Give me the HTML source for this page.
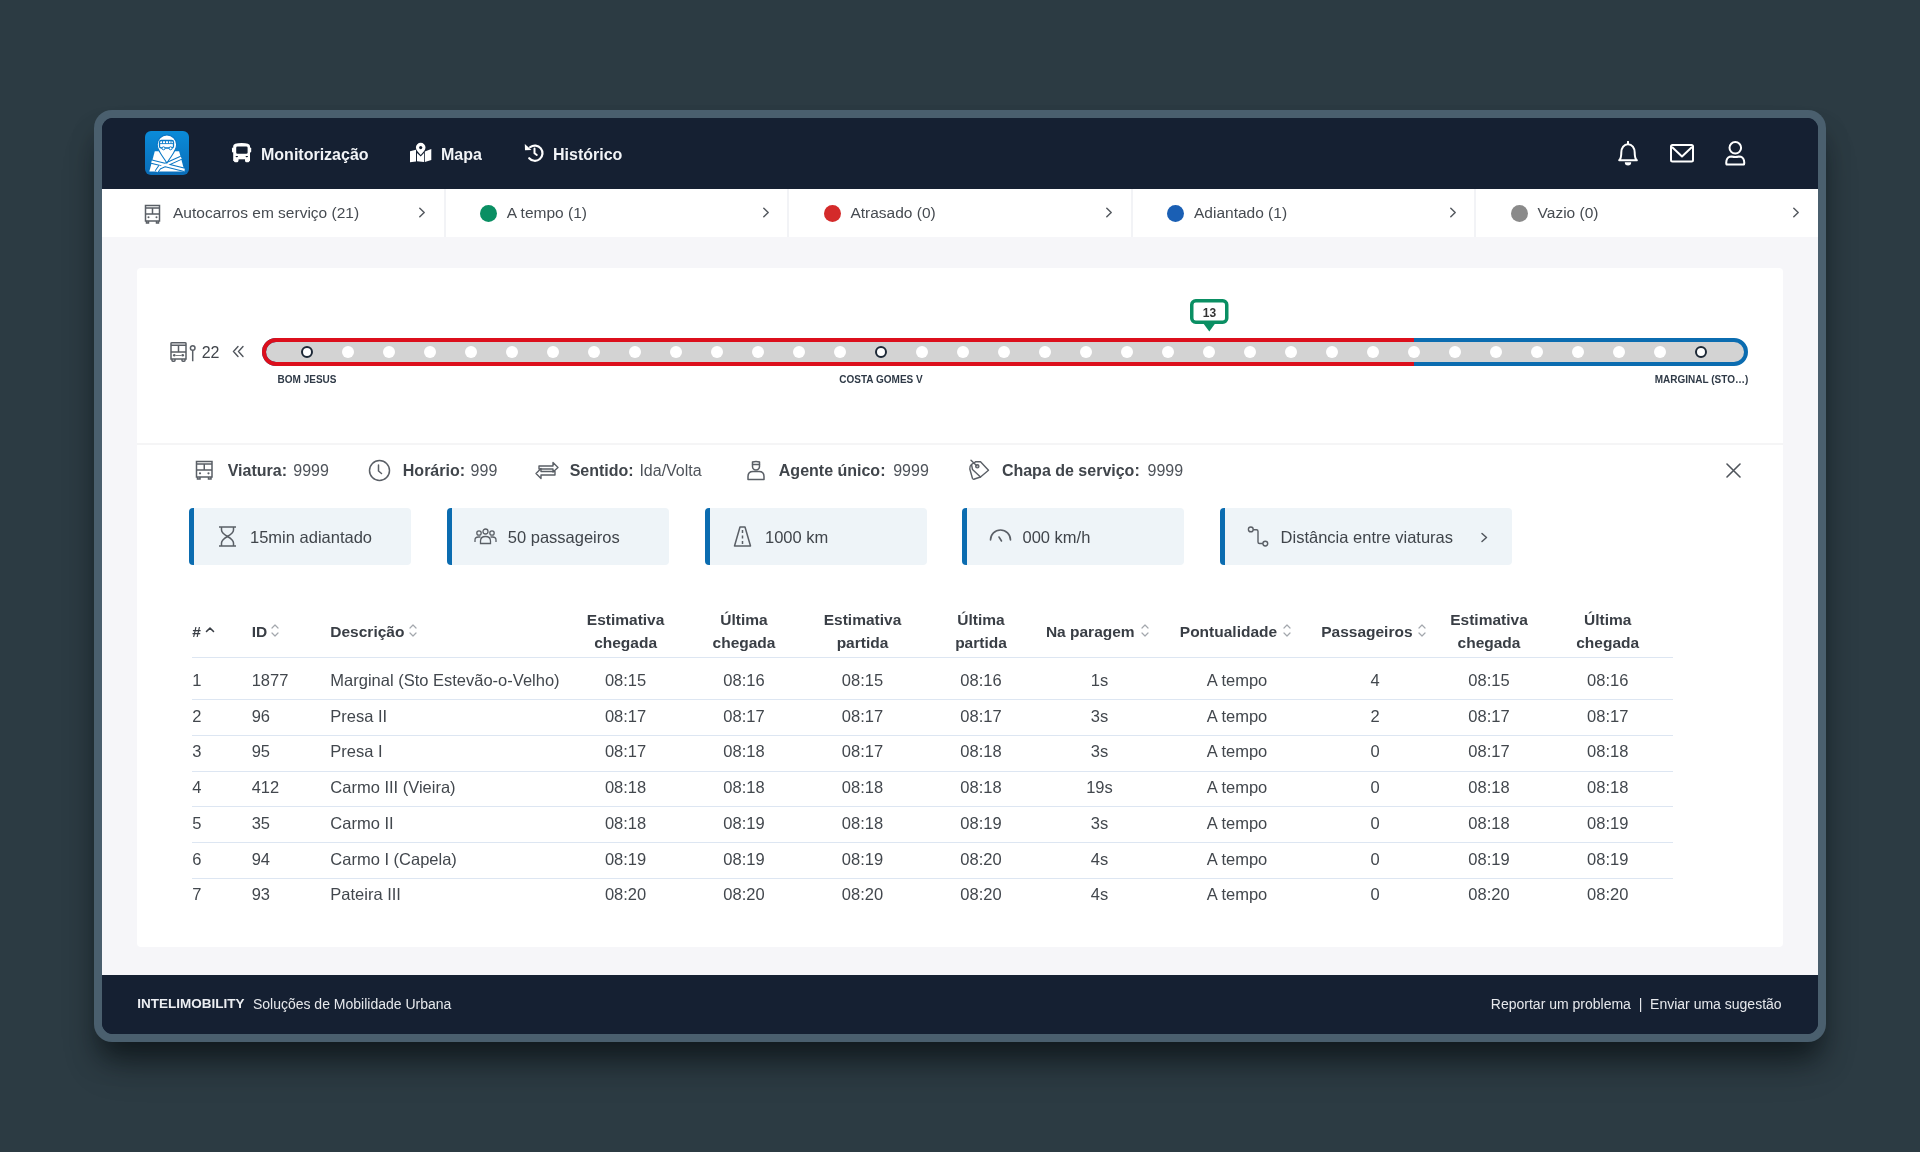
<!DOCTYPE html>
<html><head><meta charset="utf-8">
<style>
*{box-sizing:border-box;margin:0;padding:0}
html,body{width:1920px;height:1152px;overflow:hidden;-webkit-font-smoothing:antialiased;background:#2c3b43;font-family:"Liberation Sans",sans-serif;color:#40454b}
.abs{position:absolute}
#frame{position:absolute;left:94px;top:110px;width:1732px;height:932px;border-radius:18px;background:#4a5f6e;box-shadow:0 20px 26px -6px rgba(6,12,16,0.55),0 28px 40px -10px rgba(0,0,0,0.3)}
#inner{will-change:transform;position:absolute;left:102px;top:118px;width:1716px;height:916px;border-radius:11px;background:#152032;overflow:hidden}
#hdr{position:absolute;left:0;top:0;width:1716px;height:71px;background:#152032}
#status{position:absolute;left:0;top:71px;width:1716px;height:48px;background:#fff}
#footer{position:absolute;left:0;top:857px;width:1716px;height:59px;background:#152032}
#card{position:absolute;left:35px;top:150px;width:1646px;height:679px;background:#fff;border-radius:4px}
.t{position:absolute;white-space:nowrap;line-height:1}
</style></head><body>
<div id="frame"></div>
<div id="inner">
  <div class="abs" style="left:0;top:71px;width:1716px;height:786px;background:#f6f6f9"></div>
  <div id="hdr">
    <svg class="abs" style="left:43px;top:13px" width="44" height="44" viewBox="0 0 44 44">
      <defs><linearGradient id="lg" x1="0" y1="0" x2="0" y2="1"><stop offset="0" stop-color="#0a8bd9"/><stop offset="1" stop-color="#0a6db8"/></linearGradient></defs>
      <rect width="44" height="44" rx="6" fill="url(#lg)"/>
      <path d="M9.8 20.2 L4.3 40.6 L39.6 40.6 L34.1 20.2 Z" fill="#fff"/>
      <path d="M6.5 30.6 L39.6 38.9 M11.5 40.6 L15.5 35 M14.5 36.5 L36.3 26.7" stroke="#0a76c4" stroke-width="4.2" fill="none"/>
      <path d="M6.5 30.6 L39.6 38.9 M11.5 40.6 L15.5 35 M14.5 36.5 L36.3 26.7" stroke="#fff" stroke-width="2.2" fill="none"/>
      <path d="M21.9 3.9 a9.7 9.7 0 0 1 9.7 9.7 c0 6.5 -5.5 11 -9.7 18.5 c-4.2 -7.5 -9.7 -12 -9.7 -18.5 a9.7 9.7 0 0 1 9.7 -9.7z" fill="#fff" stroke="#0a78c6" stroke-width="1.1"/>
      <rect x="14.5" y="9.5" width="14" height="7.5" rx="1.8" fill="#fff" stroke="#0a7cc9" stroke-width="1.3"/>
      <path d="M15 12.6 H28 M17.5 10 V12.6 M20.5 10 V12.6 M23.5 10 V12.6 M26 10 V12.6" stroke="#0a7cc9" stroke-width="0.9"/>
      <circle cx="18.5" cy="17.3" r="1.5" fill="#fff" stroke="#0a7cc9" stroke-width="1"/><circle cx="25.6" cy="17.3" r="1.5" fill="#fff" stroke="#0a7cc9" stroke-width="1"/>
    </svg>
    <svg class="abs" style="left:124px;top:20px" width="30" height="30" viewBox="0 0 30 30">
      <path d="M7.2 8 Q7.2 5 15.6 5 Q24 5 24 8 V24.2 H7.2Z" fill="#fff"/>
      <rect x="6" y="9.5" width="2" height="5" rx="1" fill="#fff"/><rect x="23.2" y="9.5" width="2" height="5" rx="1" fill="#fff"/>
      <rect x="10.2" y="8.5" width="11.4" height="7.2" rx="1.3" fill="#152032"/>
      <path d="M9.6 18 a1.2 1.2 0 0 0 2.4 0Z M19.6 18 a1.2 1.2 0 0 0 2.4 0Z" fill="#152032"/>
      <rect x="12.3" y="21.3" width="6.8" height="4" fill="#152032"/>
      <rect x="6" y="23" width="20" height="3" fill="#152032"/>
      <rect x="8" y="20" width="4.3" height="4.3" rx="1.3" fill="#fff"/><rect x="19.1" y="20" width="4.3" height="4.3" rx="1.3" fill="#fff"/>
    </svg>
    <div class="t" style="left:159px;top:27px;font-size:16px;font-weight:700;color:#f2f4f7;line-height:19px">Monitorização</div>
    <svg class="abs" style="left:302px;top:20px" width="34" height="30" viewBox="0 0 34 30">
      <path d="M6 13.3 L12 11.8 V23.4 L6 24.3Z" fill="#fff"/>
      <path d="M20.8 13.5 L27.3 10.9 V22.1 L20.8 24Z" fill="#fff"/>
      <path d="M13 15 L16.7 18.5 L20 15 V24.1 L13 23.2Z" fill="#fff"/>
      <path d="M16.7 4.8 a4.8 4.8 0 0 1 4.8 4.8 c0 3 -2.5 4.6 -4.8 7.3 c-2.3 -2.7 -4.8 -4.3 -4.8 -7.3 a4.8 4.8 0 0 1 4.8 -4.8z" fill="#fff"/>
      <circle cx="16.7" cy="9.6" r="1.6" fill="#152032"/>
    </svg>
    <div class="t" style="left:339px;top:27px;font-size:16px;font-weight:700;color:#f2f4f7;line-height:19px">Mapa</div>
    <svg class="abs" style="left:416px;top:20px" width="32" height="30" viewBox="0 0 32 30">
      <path d="M12.2 9.2 A7.6 7.6 0 1 1 11.2 20.2" fill="none" stroke="#fff" stroke-width="2.2" stroke-linecap="round"/>
      <path d="M6.8 6 L7 12.3 L13.5 12Z" fill="#fff"/>
      <path d="M16.5 10.5 V15.3 L18.8 17" fill="none" stroke="#fff" stroke-width="2" stroke-linecap="round" stroke-linejoin="round"/>
    </svg>
    <div class="t" style="left:451px;top:27px;font-size:16px;font-weight:700;color:#f2f4f7;line-height:19px">Histórico</div>
    <svg class="abs" style="left:1514px;top:23px" width="24" height="26" viewBox="0 0 24 26">
      <path d="M3.2 19.3 C5.2 17.5 5.3 15 5.3 11.5 C5.3 6.8 8 3.2 12 3.2 C16 3.2 18.7 6.8 18.7 11.5 C18.7 15 18.8 17.5 20.8 19.3 Z" fill="none" stroke="#fff" stroke-width="2" stroke-linejoin="round"/>
      <path d="M12 0.8 V3" stroke="#fff" stroke-width="2" stroke-linecap="round"/>
      <path d="M8.8 21.2 A3.2 3.2 0 0 0 15.2 21.2Z" fill="#fff"/>
    </svg>
    <svg class="abs" style="left:1566px;top:24px" width="28" height="22" viewBox="0 0 28 22">
      <rect x="3" y="3" width="22" height="16.5" rx="1.5" fill="none" stroke="#fff" stroke-width="2"/>
      <path d="M4 5 L14 14.5 L24 5" fill="none" stroke="#fff" stroke-width="2" stroke-linejoin="round"/>
    </svg>
    <svg class="abs" style="left:1621px;top:22px" width="26" height="27" viewBox="0 0 26 27">
      <circle cx="12.3" cy="7.8" r="5.8" fill="none" stroke="#fff" stroke-width="2"/>
      <path d="M3.5 24.6 Q3 22.5 3.5 20.5 Q4.5 16.5 8.5 16.5 Q12.3 17.5 16 16.5 Q20 16.5 21 20.5 Q21.5 22.5 21 24.6Z" fill="none" stroke="#fff" stroke-width="2" stroke-linejoin="round"/>
    </svg>
  </div>
  <div id="status">
<svg class="abs" style="left:41.5px;top:14.5px" width="17" height="20" viewBox="0 0 17 20"><g fill="none" stroke="#5a5f66" stroke-width="1.5"><path d="M1.5 1.5 H15.5 V17 H1.5Z M1.5 4 H15.5 M8.5 4 V10 M1.5 10 H15.5"/><path d="M2.5 17 V19 H4.5 V17 M12.5 17 V19 H14.5 V17"/></g><circle cx="4.5" cy="13.2" r="1" fill="#5a5f66"/><circle cx="12.5" cy="13.2" r="1" fill="#5a5f66"/></svg>
<div class="t" style="left:71.0px;top:15px;font-size:15.5px;color:#464b51;line-height:18px">Autocarros em serviço (21)</div>
<svg class="abs" style="left:316.0px;top:18.2px" width="9" height="11" viewBox="0 0 9 11"><path d="M1.8 1.2 L6.2 5.5 L1.8 9.8" fill="none" stroke="#555a60" stroke-width="1.5" stroke-linecap="round" stroke-linejoin="round"/></svg>
<svg class="abs" style="left:659.6px;top:18.2px" width="9" height="11" viewBox="0 0 9 11"><path d="M1.8 1.2 L6.2 5.5 L1.8 9.8" fill="none" stroke="#555a60" stroke-width="1.5" stroke-linecap="round" stroke-linejoin="round"/></svg>
<div class="abs" style="left:341.8px;top:0;width:2px;height:48px;background:#f2f3f6"></div>
<div class="abs" style="left:378.2px;top:16px;width:17px;height:17px;border-radius:50%;background:#0a8f63"></div>
<div class="t" style="left:404.8px;top:14.5px;font-size:15.5px;color:#464b51;line-height:18px">A tempo (1)</div>
<svg class="abs" style="left:1003.2px;top:18.2px" width="9" height="11" viewBox="0 0 9 11"><path d="M1.8 1.2 L6.2 5.5 L1.8 9.8" fill="none" stroke="#555a60" stroke-width="1.5" stroke-linecap="round" stroke-linejoin="round"/></svg>
<div class="abs" style="left:685.2px;top:0;width:2px;height:48px;background:#f2f3f6"></div>
<div class="abs" style="left:721.8px;top:16px;width:17px;height:17px;border-radius:50%;background:#d42a2a"></div>
<div class="t" style="left:748.4px;top:14.5px;font-size:15.5px;color:#464b51;line-height:18px">Atrasado (0)</div>
<svg class="abs" style="left:1346.8px;top:18.2px" width="9" height="11" viewBox="0 0 9 11"><path d="M1.8 1.2 L6.2 5.5 L1.8 9.8" fill="none" stroke="#555a60" stroke-width="1.5" stroke-linecap="round" stroke-linejoin="round"/></svg>
<div class="abs" style="left:1028.6px;top:0;width:2px;height:48px;background:#f2f3f6"></div>
<div class="abs" style="left:1065.4px;top:16px;width:17px;height:17px;border-radius:50%;background:#1a5fb4"></div>
<div class="t" style="left:1092.0px;top:14.5px;font-size:15.5px;color:#464b51;line-height:18px">Adiantado (1)</div>
<svg class="abs" style="left:1690.4px;top:18.2px" width="9" height="11" viewBox="0 0 9 11"><path d="M1.8 1.2 L6.2 5.5 L1.8 9.8" fill="none" stroke="#555a60" stroke-width="1.5" stroke-linecap="round" stroke-linejoin="round"/></svg>
<div class="abs" style="left:1372.0px;top:0;width:2px;height:48px;background:#f2f3f6"></div>
<div class="abs" style="left:1409.0px;top:16px;width:17px;height:17px;border-radius:50%;background:#8a8a8a"></div>
<div class="t" style="left:1435.6px;top:14.5px;font-size:15.5px;color:#464b51;line-height:18px">Vazio (0)</div>
</div>
  <div id="card">
<svg class="abs" style="left:32.5px;top:73.5px" width="27" height="21" viewBox="0 0 27 21"><g fill="none" stroke="#5a5f66" stroke-width="1.5"><path d="M1 1.5 Q1 0.8 2 0.8 H15 Q16 0.8 16 1.5 V17 H1Z M1 3.3 H16 M8.5 3.3 V10 M1 10 H16"/><path d="M2 17 V18.6 Q2 19.3 2.8 19.3 H4.2 Q5 19.3 5 18.6 V17 M12 17 V18.6 Q12 19.3 12.8 19.3 H14.2 Q15 19.3 15 18.6 V17"/><circle cx="22.7" cy="6" r="2.3"/><path d="M22.7 8.3 V19.3"/></g><circle cx="4.3" cy="13.3" r="1.3" fill="#5a5f66"/><circle cx="12.7" cy="13.3" r="1.3" fill="#5a5f66"/><path d="M6 13.5 H11" stroke="#5a5f66" stroke-width="0.8"/></svg>
<div class="t" style="left:64.7px;top:76.5px;font-size:16px;font-weight:400;color:#40454b;">22</div>
<svg class="abs" style="left:95.0px;top:77.0px" width="13" height="13" viewBox="0 0 13 13"><path d="M6 1.5 L1.5 6.5 L6 11.5 M11 1.5 L6.5 6.5 L11 11.5" fill="none" stroke="#50555c" stroke-width="1.4" stroke-linecap="round"/></svg>
<svg class="abs" style="left:125.0px;top:70.0px" width="1486" height="28" viewBox="0 0 1486 28"><defs><clipPath id="cr"><rect x="0" y="0" width="1152" height="28"/></clipPath></defs><rect x="2" y="2" width="1482" height="24" rx="12" fill="#d3d3d3" stroke="#0b6cb0" stroke-width="4"/><rect x="2" y="2" width="1482" height="24" rx="12" fill="none" stroke="#dc0f1c" stroke-width="4" clip-path="url(#cr)"/><circle cx="45" cy="14" r="5" fill="#fff" stroke="#1c2836" stroke-width="2"/><circle cx="86" cy="14" r="6" fill="#fff"/><circle cx="127" cy="14" r="6" fill="#fff"/><circle cx="168" cy="14" r="6" fill="#fff"/><circle cx="209" cy="14" r="6" fill="#fff"/><circle cx="250" cy="14" r="6" fill="#fff"/><circle cx="291" cy="14" r="6" fill="#fff"/><circle cx="332" cy="14" r="6" fill="#fff"/><circle cx="373" cy="14" r="6" fill="#fff"/><circle cx="414" cy="14" r="6" fill="#fff"/><circle cx="455" cy="14" r="6" fill="#fff"/><circle cx="496" cy="14" r="6" fill="#fff"/><circle cx="537" cy="14" r="6" fill="#fff"/><circle cx="578" cy="14" r="6" fill="#fff"/><circle cx="619" cy="14" r="5" fill="#fff" stroke="#1c2836" stroke-width="2"/><circle cx="660" cy="14" r="6" fill="#fff"/><circle cx="701" cy="14" r="6" fill="#fff"/><circle cx="742" cy="14" r="6" fill="#fff"/><circle cx="783" cy="14" r="6" fill="#fff"/><circle cx="824" cy="14" r="6" fill="#fff"/><circle cx="865" cy="14" r="6" fill="#fff"/><circle cx="906" cy="14" r="6" fill="#fff"/><circle cx="947" cy="14" r="6" fill="#fff"/><circle cx="988" cy="14" r="6" fill="#fff"/><circle cx="1029" cy="14" r="6" fill="#fff"/><circle cx="1070" cy="14" r="6" fill="#fff"/><circle cx="1111" cy="14" r="6" fill="#fff"/><circle cx="1152" cy="14" r="6" fill="#fff"/><circle cx="1193" cy="14" r="6" fill="#fff"/><circle cx="1234" cy="14" r="6" fill="#fff"/><circle cx="1275" cy="14" r="6" fill="#fff"/><circle cx="1316" cy="14" r="6" fill="#fff"/><circle cx="1357" cy="14" r="6" fill="#fff"/><circle cx="1398" cy="14" r="6" fill="#fff"/><circle cx="1439" cy="14" r="5" fill="#fff" stroke="#1c2836" stroke-width="2"/></svg>
<div class="t" style="left:20.0px;top:106.5px;width:300px;text-align:center;font-size:10px;font-weight:700;color:#2f3a47;">BOM JESUS</div>
<div class="t" style="left:594.0px;top:106.5px;width:300px;text-align:center;font-size:10px;font-weight:700;color:#2f3a47;">COSTA GOMES V</div>
<div class="t" style="left:1414.5px;top:106.5px;width:300px;text-align:center;font-size:10px;font-weight:700;color:#2f3a47;">MARGINAL (STO…)</div>
<svg class="abs" style="left:1052.0px;top:30.0px" width="42" height="35" viewBox="0 0 42 35"><rect x="2.75" y="2.75" width="35" height="21.5" rx="4" fill="#fff" stroke="#0a8f63" stroke-width="3.5"/><path d="M14 25 L20.3 33.5 L26.5 25Z" fill="#0a8f63"/></svg>
<div class="t" style="left:922.5px;top:38.5px;width:300px;text-align:center;font-size:12px;font-weight:700;color:#333;">13</div>
<div class="abs" style="left:0;top:175px;width:1646px;height:2px;background:#f5f5f6"></div>
<svg class="abs" style="left:58.0px;top:192.0px" width="19" height="20" viewBox="0 0 19 20"><g fill="none" stroke="#5a5f66" stroke-width="1.5"><path d="M1.5 1.5 H17 V17 H1.5Z M1.5 4 H17 M9.25 4 V10 M1.5 10 H17"/><path d="M2.5 17 V19 H5 V17 M13.5 17 V19 H16 V17"/></g><circle cx="5" cy="13.3" r="1.1" fill="#5a5f66"/><circle cx="13.5" cy="13.3" r="1.1" fill="#5a5f66"/></svg>
<div class="t" style="left:90.7px;top:194.5px;font-size:16px;font-weight:700;color:#40454b;">Viatura:</div>
<div class="t" style="left:156.3px;top:194.5px;font-size:16px;font-weight:400;color:#4e535a;">9999</div>
<svg class="abs" style="left:230.5px;top:191.0px" width="23" height="23" viewBox="0 0 23 23"><circle cx="11.5" cy="11.5" r="10" fill="none" stroke="#5a5f66" stroke-width="1.5"/><path d="M10.5 6 V12 L13.5 14.5" fill="none" stroke="#5a5f66" stroke-width="1.5" stroke-linecap="round"/></svg>
<div class="t" style="left:265.8px;top:194.5px;font-size:16px;font-weight:700;color:#40454b;">Horário:</div>
<div class="t" style="left:333.6px;top:194.5px;font-size:16px;font-weight:400;color:#4e535a;">999</div>
<svg class="abs" style="left:398.0px;top:193.0px" width="24" height="19" viewBox="0 0 24 19"><g fill="none" stroke="#5a5f66" stroke-width="1.4" stroke-linejoin="round"><path d="M4 5 H18 V1.5 L23 6.5 L18 11 V8 H4Z"/><path d="M20 10.5 H6 V7.5 L1 12.5 L6 17.5 V14 H20Z"/></g></svg>
<div class="t" style="left:432.7px;top:194.5px;font-size:16px;font-weight:700;color:#40454b;">Sentido:</div>
<div class="t" style="left:502.4px;top:194.5px;font-size:16px;font-weight:400;color:#4e535a;">Ida/Volta</div>
<svg class="abs" style="left:610.0px;top:191.5px" width="18" height="21" viewBox="0 0 18 21"><g fill="none" stroke="#5a5f66" stroke-width="1.5" stroke-linejoin="round"><path d="M5.5 4.5 V2 Q9 0.8 12.5 2 V4.5 Z"/><path d="M5.5 4.5 V6.5 a3.5 3.5 0 0 0 7 0 V4.5"/><path d="M1 19.5 V16.5 Q1 11.5 6 11.5 H12 Q17 11.5 17 16.5 V19.5Z"/></g></svg>
<div class="t" style="left:641.8px;top:194.5px;font-size:16px;font-weight:700;color:#40454b;">Agente único:</div>
<div class="t" style="left:756.2px;top:194.5px;font-size:16px;font-weight:400;color:#4e535a;">9999</div>
<svg class="abs" style="left:825px;top:187px" width="30" height="30" viewBox="0 0 30 30"><g fill="none" stroke="#5a5f66" stroke-width="1.4" stroke-linejoin="round" stroke-linecap="round"><path d="M13.5 6.8 H18.5 L26.5 15.3 L18.5 22 L10.5 14.5 L9.5 9.5 Z"/><path d="M9.5 9.5 Q7.5 11 7.8 14 L10.5 23.5 Q11 24.5 12.5 24 L18.5 22"/><path d="M9 5.3 L15 11"/><circle cx="15.3" cy="11.3" r="1.6"/></g></svg>
<div class="t" style="left:864.9px;top:194.5px;font-size:16px;font-weight:700;color:#40454b;">Chapa de serviço:</div>
<div class="t" style="left:1010.5px;top:194.5px;font-size:16px;font-weight:400;color:#4e535a;">9999</div>
<svg class="abs" style="left:1588.5px;top:194.5px" width="15" height="15" viewBox="0 0 15 15"><path d="M1 1 L14 14 M14 1 L1 14" stroke="#50555c" stroke-width="1.6" stroke-linecap="round"/></svg>
<div class="abs" style="left:52px;top:240px;width:222px;height:57px;background:#eef4f8;border-radius:4px;border-left:5px solid #0b6cb0"></div>
<div class="abs" style="left:310px;top:240px;width:222px;height:57px;background:#eef4f8;border-radius:4px;border-left:5px solid #0b6cb0"></div>
<div class="abs" style="left:568px;top:240px;width:222px;height:57px;background:#eef4f8;border-radius:4px;border-left:5px solid #0b6cb0"></div>
<div class="abs" style="left:825px;top:240px;width:222px;height:57px;background:#eef4f8;border-radius:4px;border-left:5px solid #0b6cb0"></div>
<div class="abs" style="left:1083px;top:240px;width:292px;height:57px;background:#eef4f8;border-radius:4px;border-left:5px solid #0b6cb0"></div>
<svg class="abs" style="left:81.0px;top:258.0px" width="19" height="21" viewBox="0 0 19 21"><g fill="none" stroke="#5a5f66" stroke-width="1.5"><path d="M1 1 H18 M1 20 H18"/><path d="M3.5 1 V4 Q3.5 7 9.5 10.5 Q15.5 7 15.5 4 V1"/><path d="M3.5 20 V17 Q3.5 14 9.5 10.5 Q15.5 14 15.5 17 V20"/></g></svg>
<div class="t" style="left:113.0px;top:260.7px;font-size:16.5px;font-weight:400;color:#40454b;">15min adiantado</div>
<svg class="abs" style="left:337.0px;top:260.0px" width="23" height="17" viewBox="0 0 23 17"><g fill="none" stroke="#5a5f66" stroke-width="1.3"><circle cx="11.5" cy="3.5" r="2.5"/><circle cx="5" cy="5" r="2.2"/><circle cx="18" cy="5" r="2.2"/><path d="M6.5 15.5 V13 Q6.5 8.5 11.5 8.5 Q16.5 8.5 16.5 13 V15.5Z"/><path d="M1 14 V12 Q1 9 4.5 9 H6.5 M22 14 V12 Q22 9 18.5 9 H16.5"/></g></svg>
<div class="t" style="left:370.8px;top:260.7px;font-size:16.5px;font-weight:400;color:#40454b;">50 passageiros</div>
<svg class="abs" style="left:596.0px;top:258.0px" width="19" height="21" viewBox="0 0 19 21"><g fill="none" stroke="#5a5f66" stroke-width="1.5" stroke-linejoin="round"><path d="M7 1 H12 L17.5 20 H1.5Z"/><path d="M9.5 4 V7 M9.5 9.5 V12.5 M9.5 15 V18"/></g></svg>
<div class="t" style="left:628.0px;top:260.7px;font-size:16.5px;font-weight:400;color:#40454b;">1000 km</div>
<svg class="abs" style="left:852.0px;top:260.0px" width="23" height="16" viewBox="0 0 23 16"><g fill="none" stroke="#5a5f66" stroke-width="1.6" stroke-linecap="round"><path d="M1.5 12 A10 10 0 0 1 21.5 12"/><path d="M10 9 L12.5 13"/></g></svg>
<div class="t" style="left:885.5px;top:260.7px;font-size:16.5px;font-weight:400;color:#40454b;">000 km/h</div>
<svg class="abs" style="left:1109.0px;top:256.0px" width="24" height="24" viewBox="0 0 24 24"><g fill="none" stroke="#5a5f66" stroke-width="1.4"><circle cx="4.8" cy="5.4" r="2.4"/><circle cx="19.3" cy="19.6" r="2.4"/><path d="M7.2 5.7 H10.5 Q12 5.7 12 7.2 V18 Q12 19.5 13.5 19.5 H16.9"/></g></svg>
<div class="t" style="left:1143.6px;top:260.7px;font-size:16.5px;font-weight:400;color:#40454b;">Distância entre viaturas</div>
<svg class="abs" style="left:1342.5px;top:264.0px" width="9" height="11" viewBox="0 0 9 11"><path d="M2 1.5 L6.5 5.5 L2 9.5" fill="none" stroke="#50555c" stroke-width="1.5" stroke-linecap="round" stroke-linejoin="round"/></svg>
<div class="t" style="left:55.3px;top:355.6px;font-size:15.5px;font-weight:700;color:#393e45;">#</div>
<svg class="abs" style="left:68.0px;top:358.0px" width="10" height="7" viewBox="0 0 10 7"><path d="M1.5 5.5 L5 2 L8.5 5.5" fill="none" stroke="#393e45" stroke-width="1.6" stroke-linecap="round" stroke-linejoin="round"/></svg>
<div class="t" style="left:114.7px;top:355.6px;font-size:15.5px;font-weight:700;color:#393e45;">ID</div>
<svg class="abs" style="left:134.0px;top:355.5px" width="8" height="13" viewBox="0 0 8 13"><path d="M1 4 L4 1 L7 4 M1 9 L4 12 L7 9" fill="none" stroke="#a3a7ad" stroke-width="1.2" stroke-linecap="round" stroke-linejoin="round"/></svg>
<div class="t" style="left:193.3px;top:355.6px;font-size:15.5px;font-weight:700;color:#393e45;">Descrição</div>
<svg class="abs" style="left:272.3px;top:355.5px" width="8" height="13" viewBox="0 0 8 13"><path d="M1 4 L4 1 L7 4 M1 9 L4 12 L7 9" fill="none" stroke="#a3a7ad" stroke-width="1.2" stroke-linecap="round" stroke-linejoin="round"/></svg>
<div class="t" style="left:338.6px;top:343.9px;width:300px;text-align:center;font-size:15.5px;font-weight:700;color:#393e45;">Estimativa</div>
<div class="t" style="left:338.6px;top:367.4px;width:300px;text-align:center;font-size:15.5px;font-weight:700;color:#393e45;">chegada</div>
<div class="t" style="left:457.0px;top:343.9px;width:300px;text-align:center;font-size:15.5px;font-weight:700;color:#393e45;">Última</div>
<div class="t" style="left:457.0px;top:367.4px;width:300px;text-align:center;font-size:15.5px;font-weight:700;color:#393e45;">chegada</div>
<div class="t" style="left:575.5px;top:343.9px;width:300px;text-align:center;font-size:15.5px;font-weight:700;color:#393e45;">Estimativa</div>
<div class="t" style="left:575.5px;top:367.4px;width:300px;text-align:center;font-size:15.5px;font-weight:700;color:#393e45;">partida</div>
<div class="t" style="left:694.0px;top:343.9px;width:300px;text-align:center;font-size:15.5px;font-weight:700;color:#393e45;">Última</div>
<div class="t" style="left:694.0px;top:367.4px;width:300px;text-align:center;font-size:15.5px;font-weight:700;color:#393e45;">partida</div>
<div class="t" style="left:1202.0px;top:343.9px;width:300px;text-align:center;font-size:15.5px;font-weight:700;color:#393e45;">Estimativa</div>
<div class="t" style="left:1202.0px;top:367.4px;width:300px;text-align:center;font-size:15.5px;font-weight:700;color:#393e45;">chegada</div>
<div class="t" style="left:1320.7px;top:343.9px;width:300px;text-align:center;font-size:15.5px;font-weight:700;color:#393e45;">Última</div>
<div class="t" style="left:1320.7px;top:367.4px;width:300px;text-align:center;font-size:15.5px;font-weight:700;color:#393e45;">chegada</div>
<div class="t" style="left:908.9px;top:355.6px;font-size:15.5px;font-weight:700;color:#393e45;">Na paragem</div>
<svg class="abs" style="left:1003.5px;top:355.5px" width="8" height="13" viewBox="0 0 8 13"><path d="M1 4 L4 1 L7 4 M1 9 L4 12 L7 9" fill="none" stroke="#a3a7ad" stroke-width="1.2" stroke-linecap="round" stroke-linejoin="round"/></svg>
<div class="t" style="left:1042.8px;top:355.6px;font-size:15.5px;font-weight:700;color:#393e45;">Pontualidade</div>
<svg class="abs" style="left:1146.3px;top:355.5px" width="8" height="13" viewBox="0 0 8 13"><path d="M1 4 L4 1 L7 4 M1 9 L4 12 L7 9" fill="none" stroke="#a3a7ad" stroke-width="1.2" stroke-linecap="round" stroke-linejoin="round"/></svg>
<div class="t" style="left:1184.2px;top:355.6px;font-size:15.5px;font-weight:700;color:#393e45;">Passageiros</div>
<svg class="abs" style="left:1280.7px;top:355.5px" width="8" height="13" viewBox="0 0 8 13"><path d="M1 4 L4 1 L7 4 M1 9 L4 12 L7 9" fill="none" stroke="#a3a7ad" stroke-width="1.2" stroke-linecap="round" stroke-linejoin="round"/></svg>
<div class="abs" style="left:55px;top:389px;width:1481px;height:1px;background:#dde6f2"></div>
<div class="abs" style="left:55px;top:431px;width:1481px;height:1px;background:#dde6f2"></div>
<div class="abs" style="left:55px;top:467px;width:1481px;height:1px;background:#dde6f2"></div>
<div class="abs" style="left:55px;top:503px;width:1481px;height:1px;background:#dde6f2"></div>
<div class="abs" style="left:55px;top:538px;width:1481px;height:1px;background:#dde6f2"></div>
<div class="abs" style="left:55px;top:574px;width:1481px;height:1px;background:#dde6f2"></div>
<div class="abs" style="left:55px;top:610px;width:1481px;height:1px;background:#dde6f2"></div>
<div class="t" style="left:55.3px;top:403.9px;font-size:16.5px;font-weight:400;color:#42474d;">1</div>
<div class="t" style="left:114.7px;top:403.9px;font-size:16.5px;font-weight:400;color:#42474d;">1877</div>
<div class="t" style="left:193.3px;top:403.9px;font-size:16.5px;font-weight:400;color:#42474d;">Marginal (Sto Estevão-o-Velho)</div>
<div class="t" style="left:338.6px;top:403.9px;width:300px;text-align:center;font-size:16.5px;font-weight:400;color:#42474d;">08:15</div>
<div class="t" style="left:457.0px;top:403.9px;width:300px;text-align:center;font-size:16.5px;font-weight:400;color:#42474d;">08:16</div>
<div class="t" style="left:575.5px;top:403.9px;width:300px;text-align:center;font-size:16.5px;font-weight:400;color:#42474d;">08:15</div>
<div class="t" style="left:694.0px;top:403.9px;width:300px;text-align:center;font-size:16.5px;font-weight:400;color:#42474d;">08:16</div>
<div class="t" style="left:812.5px;top:403.9px;width:300px;text-align:center;font-size:16.5px;font-weight:400;color:#42474d;">1s</div>
<div class="t" style="left:950.0px;top:403.9px;width:300px;text-align:center;font-size:16.5px;font-weight:400;color:#42474d;">A tempo</div>
<div class="t" style="left:1088.0px;top:403.9px;width:300px;text-align:center;font-size:16.5px;font-weight:400;color:#42474d;">4</div>
<div class="t" style="left:1202.0px;top:403.9px;width:300px;text-align:center;font-size:16.5px;font-weight:400;color:#42474d;">08:15</div>
<div class="t" style="left:1320.7px;top:403.9px;width:300px;text-align:center;font-size:16.5px;font-weight:400;color:#42474d;">08:16</div>
<div class="t" style="left:55.3px;top:439.7px;font-size:16.5px;font-weight:400;color:#42474d;">2</div>
<div class="t" style="left:114.7px;top:439.7px;font-size:16.5px;font-weight:400;color:#42474d;">96</div>
<div class="t" style="left:193.3px;top:439.7px;font-size:16.5px;font-weight:400;color:#42474d;">Presa II</div>
<div class="t" style="left:338.6px;top:439.7px;width:300px;text-align:center;font-size:16.5px;font-weight:400;color:#42474d;">08:17</div>
<div class="t" style="left:457.0px;top:439.7px;width:300px;text-align:center;font-size:16.5px;font-weight:400;color:#42474d;">08:17</div>
<div class="t" style="left:575.5px;top:439.7px;width:300px;text-align:center;font-size:16.5px;font-weight:400;color:#42474d;">08:17</div>
<div class="t" style="left:694.0px;top:439.7px;width:300px;text-align:center;font-size:16.5px;font-weight:400;color:#42474d;">08:17</div>
<div class="t" style="left:812.5px;top:439.7px;width:300px;text-align:center;font-size:16.5px;font-weight:400;color:#42474d;">3s</div>
<div class="t" style="left:950.0px;top:439.7px;width:300px;text-align:center;font-size:16.5px;font-weight:400;color:#42474d;">A tempo</div>
<div class="t" style="left:1088.0px;top:439.7px;width:300px;text-align:center;font-size:16.5px;font-weight:400;color:#42474d;">2</div>
<div class="t" style="left:1202.0px;top:439.7px;width:300px;text-align:center;font-size:16.5px;font-weight:400;color:#42474d;">08:17</div>
<div class="t" style="left:1320.7px;top:439.7px;width:300px;text-align:center;font-size:16.5px;font-weight:400;color:#42474d;">08:17</div>
<div class="t" style="left:55.3px;top:475.4px;font-size:16.5px;font-weight:400;color:#42474d;">3</div>
<div class="t" style="left:114.7px;top:475.4px;font-size:16.5px;font-weight:400;color:#42474d;">95</div>
<div class="t" style="left:193.3px;top:475.4px;font-size:16.5px;font-weight:400;color:#42474d;">Presa I</div>
<div class="t" style="left:338.6px;top:475.4px;width:300px;text-align:center;font-size:16.5px;font-weight:400;color:#42474d;">08:17</div>
<div class="t" style="left:457.0px;top:475.4px;width:300px;text-align:center;font-size:16.5px;font-weight:400;color:#42474d;">08:18</div>
<div class="t" style="left:575.5px;top:475.4px;width:300px;text-align:center;font-size:16.5px;font-weight:400;color:#42474d;">08:17</div>
<div class="t" style="left:694.0px;top:475.4px;width:300px;text-align:center;font-size:16.5px;font-weight:400;color:#42474d;">08:18</div>
<div class="t" style="left:812.5px;top:475.4px;width:300px;text-align:center;font-size:16.5px;font-weight:400;color:#42474d;">3s</div>
<div class="t" style="left:950.0px;top:475.4px;width:300px;text-align:center;font-size:16.5px;font-weight:400;color:#42474d;">A tempo</div>
<div class="t" style="left:1088.0px;top:475.4px;width:300px;text-align:center;font-size:16.5px;font-weight:400;color:#42474d;">0</div>
<div class="t" style="left:1202.0px;top:475.4px;width:300px;text-align:center;font-size:16.5px;font-weight:400;color:#42474d;">08:17</div>
<div class="t" style="left:1320.7px;top:475.4px;width:300px;text-align:center;font-size:16.5px;font-weight:400;color:#42474d;">08:18</div>
<div class="t" style="left:55.3px;top:511.2px;font-size:16.5px;font-weight:400;color:#42474d;">4</div>
<div class="t" style="left:114.7px;top:511.2px;font-size:16.5px;font-weight:400;color:#42474d;">412</div>
<div class="t" style="left:193.3px;top:511.2px;font-size:16.5px;font-weight:400;color:#42474d;">Carmo III (Vieira)</div>
<div class="t" style="left:338.6px;top:511.2px;width:300px;text-align:center;font-size:16.5px;font-weight:400;color:#42474d;">08:18</div>
<div class="t" style="left:457.0px;top:511.2px;width:300px;text-align:center;font-size:16.5px;font-weight:400;color:#42474d;">08:18</div>
<div class="t" style="left:575.5px;top:511.2px;width:300px;text-align:center;font-size:16.5px;font-weight:400;color:#42474d;">08:18</div>
<div class="t" style="left:694.0px;top:511.2px;width:300px;text-align:center;font-size:16.5px;font-weight:400;color:#42474d;">08:18</div>
<div class="t" style="left:812.5px;top:511.2px;width:300px;text-align:center;font-size:16.5px;font-weight:400;color:#42474d;">19s</div>
<div class="t" style="left:950.0px;top:511.2px;width:300px;text-align:center;font-size:16.5px;font-weight:400;color:#42474d;">A tempo</div>
<div class="t" style="left:1088.0px;top:511.2px;width:300px;text-align:center;font-size:16.5px;font-weight:400;color:#42474d;">0</div>
<div class="t" style="left:1202.0px;top:511.2px;width:300px;text-align:center;font-size:16.5px;font-weight:400;color:#42474d;">08:18</div>
<div class="t" style="left:1320.7px;top:511.2px;width:300px;text-align:center;font-size:16.5px;font-weight:400;color:#42474d;">08:18</div>
<div class="t" style="left:55.3px;top:546.9px;font-size:16.5px;font-weight:400;color:#42474d;">5</div>
<div class="t" style="left:114.7px;top:546.9px;font-size:16.5px;font-weight:400;color:#42474d;">35</div>
<div class="t" style="left:193.3px;top:546.9px;font-size:16.5px;font-weight:400;color:#42474d;">Carmo II</div>
<div class="t" style="left:338.6px;top:546.9px;width:300px;text-align:center;font-size:16.5px;font-weight:400;color:#42474d;">08:18</div>
<div class="t" style="left:457.0px;top:546.9px;width:300px;text-align:center;font-size:16.5px;font-weight:400;color:#42474d;">08:19</div>
<div class="t" style="left:575.5px;top:546.9px;width:300px;text-align:center;font-size:16.5px;font-weight:400;color:#42474d;">08:18</div>
<div class="t" style="left:694.0px;top:546.9px;width:300px;text-align:center;font-size:16.5px;font-weight:400;color:#42474d;">08:19</div>
<div class="t" style="left:812.5px;top:546.9px;width:300px;text-align:center;font-size:16.5px;font-weight:400;color:#42474d;">3s</div>
<div class="t" style="left:950.0px;top:546.9px;width:300px;text-align:center;font-size:16.5px;font-weight:400;color:#42474d;">A tempo</div>
<div class="t" style="left:1088.0px;top:546.9px;width:300px;text-align:center;font-size:16.5px;font-weight:400;color:#42474d;">0</div>
<div class="t" style="left:1202.0px;top:546.9px;width:300px;text-align:center;font-size:16.5px;font-weight:400;color:#42474d;">08:18</div>
<div class="t" style="left:1320.7px;top:546.9px;width:300px;text-align:center;font-size:16.5px;font-weight:400;color:#42474d;">08:19</div>
<div class="t" style="left:55.3px;top:582.7px;font-size:16.5px;font-weight:400;color:#42474d;">6</div>
<div class="t" style="left:114.7px;top:582.7px;font-size:16.5px;font-weight:400;color:#42474d;">94</div>
<div class="t" style="left:193.3px;top:582.7px;font-size:16.5px;font-weight:400;color:#42474d;">Carmo I (Capela)</div>
<div class="t" style="left:338.6px;top:582.7px;width:300px;text-align:center;font-size:16.5px;font-weight:400;color:#42474d;">08:19</div>
<div class="t" style="left:457.0px;top:582.7px;width:300px;text-align:center;font-size:16.5px;font-weight:400;color:#42474d;">08:19</div>
<div class="t" style="left:575.5px;top:582.7px;width:300px;text-align:center;font-size:16.5px;font-weight:400;color:#42474d;">08:19</div>
<div class="t" style="left:694.0px;top:582.7px;width:300px;text-align:center;font-size:16.5px;font-weight:400;color:#42474d;">08:20</div>
<div class="t" style="left:812.5px;top:582.7px;width:300px;text-align:center;font-size:16.5px;font-weight:400;color:#42474d;">4s</div>
<div class="t" style="left:950.0px;top:582.7px;width:300px;text-align:center;font-size:16.5px;font-weight:400;color:#42474d;">A tempo</div>
<div class="t" style="left:1088.0px;top:582.7px;width:300px;text-align:center;font-size:16.5px;font-weight:400;color:#42474d;">0</div>
<div class="t" style="left:1202.0px;top:582.7px;width:300px;text-align:center;font-size:16.5px;font-weight:400;color:#42474d;">08:19</div>
<div class="t" style="left:1320.7px;top:582.7px;width:300px;text-align:center;font-size:16.5px;font-weight:400;color:#42474d;">08:19</div>
<div class="t" style="left:55.3px;top:618.4px;font-size:16.5px;font-weight:400;color:#42474d;">7</div>
<div class="t" style="left:114.7px;top:618.4px;font-size:16.5px;font-weight:400;color:#42474d;">93</div>
<div class="t" style="left:193.3px;top:618.4px;font-size:16.5px;font-weight:400;color:#42474d;">Pateira III</div>
<div class="t" style="left:338.6px;top:618.4px;width:300px;text-align:center;font-size:16.5px;font-weight:400;color:#42474d;">08:20</div>
<div class="t" style="left:457.0px;top:618.4px;width:300px;text-align:center;font-size:16.5px;font-weight:400;color:#42474d;">08:20</div>
<div class="t" style="left:575.5px;top:618.4px;width:300px;text-align:center;font-size:16.5px;font-weight:400;color:#42474d;">08:20</div>
<div class="t" style="left:694.0px;top:618.4px;width:300px;text-align:center;font-size:16.5px;font-weight:400;color:#42474d;">08:20</div>
<div class="t" style="left:812.5px;top:618.4px;width:300px;text-align:center;font-size:16.5px;font-weight:400;color:#42474d;">4s</div>
<div class="t" style="left:950.0px;top:618.4px;width:300px;text-align:center;font-size:16.5px;font-weight:400;color:#42474d;">A tempo</div>
<div class="t" style="left:1088.0px;top:618.4px;width:300px;text-align:center;font-size:16.5px;font-weight:400;color:#42474d;">0</div>
<div class="t" style="left:1202.0px;top:618.4px;width:300px;text-align:center;font-size:16.5px;font-weight:400;color:#42474d;">08:20</div>
<div class="t" style="left:1320.7px;top:618.4px;width:300px;text-align:center;font-size:16.5px;font-weight:400;color:#42474d;">08:20</div>
</div>
  <div id="footer"><div class="t" style="left:35.3px;top:22.3px;font-size:13.5px;font-weight:700;color:#eceef2">INTELIMOBILITY</div><div class="t" style="left:150.9px;top:21.9px;font-size:14px;color:#e6e8ec">Soluções de Mobilidade Urbana</div><div class="t" style="right:36.4px;top:21.9px;font-size:14px;color:#e6e8ec">Reportar um problema &nbsp;|&nbsp; Enviar uma sugestão</div></div>
</div>
</body></html>
